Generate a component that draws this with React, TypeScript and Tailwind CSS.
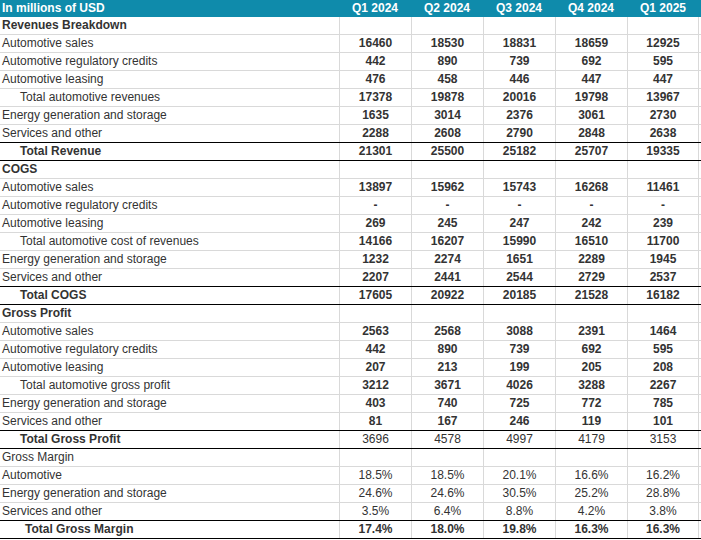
import React from 'react';

type Row = {
  label: string;
  values?: string[];
  kind?: 'section' | 'item' | 'sub' | 'total';
  boldValues?: boolean;
  boldLabel?: boolean;
  indent?: string;
};

const rows: Row[] = [
  { label: 'Revenues Breakdown', kind: 'section', boldLabel: true },
  { label: 'Automotive sales', values: ['16460', '18530', '18831', '18659', '12925'], boldValues: true },
  { label: 'Automotive regulatory credits', values: ['442', '890', '739', '692', '595'], boldValues: true },
  { label: 'Automotive leasing', values: ['476', '458', '446', '447', '447'], boldValues: true },
  { label: 'Total automotive revenues', values: ['17378', '19878', '20016', '19798', '13967'], boldValues: true, indent: 'pl-[20px]' },
  { label: 'Energy generation and storage', values: ['1635', '3014', '2376', '3061', '2730'], boldValues: true },
  { label: 'Services and other', values: ['2288', '2608', '2790', '2848', '2638'], boldValues: true },
  { label: 'Total Revenue', values: ['21301', '25500', '25182', '25707', '19335'], kind: 'total', boldValues: true, boldLabel: true, indent: 'pl-[20px]' },
  { label: 'COGS', kind: 'section', boldLabel: true },
  { label: 'Automotive sales', values: ['13897', '15962', '15743', '16268', '11461'], boldValues: true },
  { label: 'Automotive regulatory credits', values: ['-', '-', '-', '-', '-'], boldValues: true },
  { label: 'Automotive leasing', values: ['269', '245', '247', '242', '239'], boldValues: true },
  { label: 'Total automotive cost of revenues', values: ['14166', '16207', '15990', '16510', '11700'], boldValues: true, indent: 'pl-[20px]' },
  { label: 'Energy generation and storage', values: ['1232', '2274', '1651', '2289', '1945'], boldValues: true },
  { label: 'Services and other', values: ['2207', '2441', '2544', '2729', '2537'], boldValues: true },
  { label: 'Total COGS', values: ['17605', '20922', '20185', '21528', '16182'], kind: 'total', boldValues: true, boldLabel: true, indent: 'pl-[20px]' },
  { label: 'Gross Profit', kind: 'section', boldLabel: true },
  { label: 'Automotive sales', values: ['2563', '2568', '3088', '2391', '1464'], boldValues: true },
  { label: 'Automotive regulatory credits', values: ['442', '890', '739', '692', '595'], boldValues: true },
  { label: 'Automotive leasing', values: ['207', '213', '199', '205', '208'], boldValues: true },
  { label: 'Total automotive gross profit', values: ['3212', '3671', '4026', '3288', '2267'], boldValues: true, indent: 'pl-[20px]' },
  { label: 'Energy generation and storage', values: ['403', '740', '725', '772', '785'], boldValues: true },
  { label: 'Services and other', values: ['81', '167', '246', '119', '101'], boldValues: true },
  { label: 'Total Gross Profit', values: ['3696', '4578', '4997', '4179', '3153'], kind: 'total', boldLabel: true, indent: 'pl-[20px]' },
  { label: 'Gross Margin', kind: 'section' },
  { label: 'Automotive', values: ['18.5%', '18.5%', '20.1%', '16.6%', '16.2%'] },
  { label: 'Energy generation and storage', values: ['24.6%', '24.6%', '30.5%', '25.2%', '28.8%'] },
  { label: 'Services and other', values: ['3.5%', '6.4%', '8.8%', '4.2%', '3.8%'] },
  { label: 'Total Gross Margin', values: ['17.4%', '18.0%', '19.8%', '16.3%', '16.3%'], kind: 'total', boldValues: true, boldLabel: true, indent: 'pl-[25px]' },
];

const quarters = ['Q1 2024', 'Q2 2024', 'Q3 2024', 'Q4 2024', 'Q1 2025'];

export default function App() {
  return (
    <div className="w-[701px] h-[540px] bg-white font-['Liberation_Sans',Arial,sans-serif] text-[12px] text-[#333] overflow-hidden">
      <div className="flex h-[17px] bg-[#0f8bab] text-white font-bold leading-[17px]">
        <div className="w-[339px] pl-[2px]">In millions of USD</div>
        {quarters.map((q) => (
          <div key={q} className="w-[72px] text-center">{q}</div>
        ))}
      </div>
      {rows.map((r, i) => {
        const next = rows[i + 1];
        const black = r.kind === 'total' || next?.kind === 'total';
        return (
          <div
            key={i}
            className={`flex h-[18px] border-b leading-[17px] ${black ? 'border-black' : 'border-[#d9d9d9]'}`}
          >
            <div className={`w-[339px] whitespace-nowrap ${r.indent ?? 'pl-[2px]'} ${r.boldLabel ? 'font-bold' : ''}`}>
              {r.label}
            </div>
            {[0, 1, 2, 3, 4].map((c) => (
              <div
                key={c}
                className={`w-[72px] border-l border-[#d9d9d9] text-center ${c === 4 ? 'border-r' : ''} ${r.boldValues ? 'font-bold' : ''}`}
              >
                {r.values?.[c] ?? ''}
              </div>
            ))}
          </div>
        );
      })}
    </div>
  );
}
